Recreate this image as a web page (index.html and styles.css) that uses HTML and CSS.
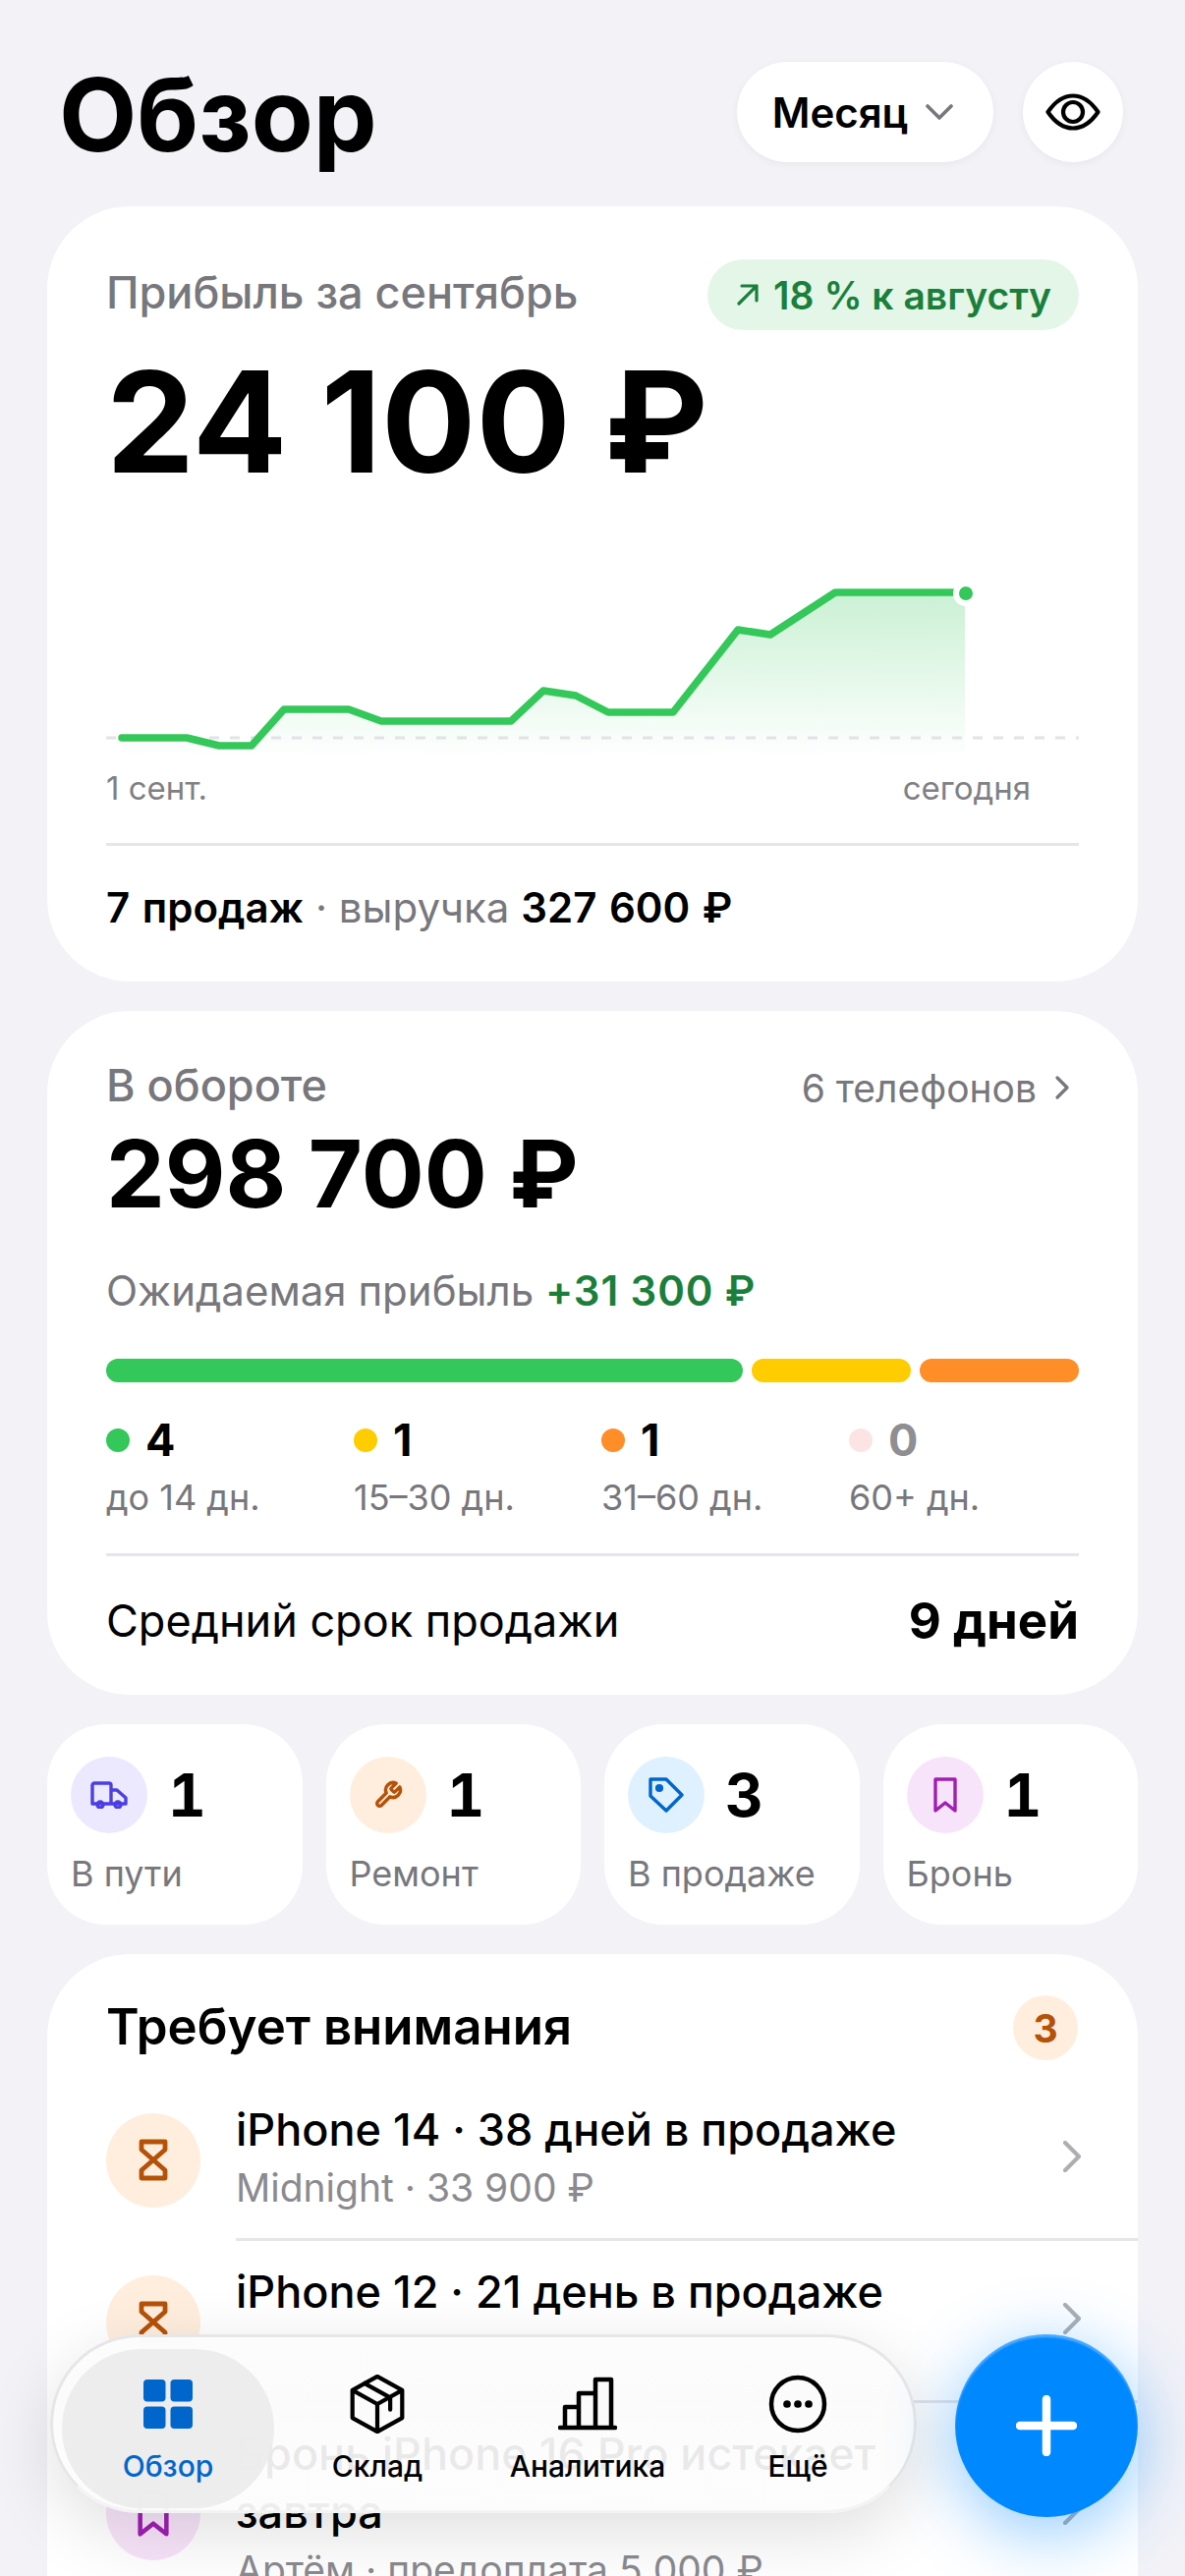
FILE: index.html
```html
<!DOCTYPE html>
<html lang="ru">
<head>
    <meta charset="UTF-8">
    <meta name="viewport" content="width=device-width, initial-scale=1.0">
    <title>Обзор</title>
    <link rel="stylesheet" href="styles.css">
</head>
<body>
<div class="screen">
    <header class="top">
        <h1>Обзор</h1>
        <div class="top-actions">
            <button class="pill">Месяц
                <svg class="pill-chev" viewBox="0 0 28 16"><path d="M2 2l12 12L26 2"/></svg>
            </button>
            <button class="round">
                <svg viewBox="0 0 56 38"><path d="M2.5 19C10 8 19 2.5 28 2.5S46 8 53.5 19C46 30 37 35.5 28 35.5S10 30 2.5 19Z"/><circle cx="28" cy="19" r="10"/></svg>
            </button>
        </div>
    </header>

    <section class="card profit">
        <div class="card-head">
            <span class="muted">Прибыль за сентябрь</span>
            <span class="trend">
                <svg viewBox="0 0 24 24"><path d="M3 21L21 3M6 3h15v15"/></svg>
                18 % к августу
            </span>
        </div>
        <div class="big">24 100 ₽</div>
        <svg class="chart" viewBox="0 0 990 192">
            <defs>
                <linearGradient id="chartFill" x1="0" y1="0" x2="0" y2="1">
                    <stop offset="0" stop-color="#34c759" stop-opacity="0.26"/>
                    <stop offset="1" stop-color="#34c759" stop-opacity="0"/>
                </linearGradient>
            </defs>
            <path class="chart-area" d="M16 171H82L115 179H148L181 142H247L280 154H412L445 123L478 128L511 145H577L643 61L676 66L742 23H874V192H16Z" fill="url(#chartFill)"/>
            <line class="chart-base" x1="0" y1="171" x2="990" y2="171"/>
            <path class="chart-line" d="M16 171H82L115 179H148L181 142H247L280 154H412L445 123L478 128L511 145H577L643 61L676 66L742 23H874"/>
            <circle class="chart-dot" cx="875" cy="24" r="10"/>
        </svg>
        <div class="chart-labels">
            <span>1 сент.</span>
            <span class="chart-today">сегодня</span>
        </div>
        <div class="summary"><b>7 продаж</b> · выручка <b>327 600 ₽</b></div>
    </section>

    <section class="card stock">
        <div class="card-head stock-head">
            <span class="muted">В обороте</span>
            <span class="phones">6 телефонов
                <svg viewBox="0 0 16 26"><path d="M3 3l10 10L3 23"/></svg>
            </span>
        </div>
        <div class="big-2">298 700 ₽</div>
        <div class="expected">Ожидаемая прибыль <b>+31 300 ₽</b></div>
        <div class="bar">
            <span class="seg seg-wide green"></span>
            <span class="seg yellow"></span>
            <span class="seg orange"></span>
        </div>
        <div class="legend">
            <div>
                <div class="legend-num"><i class="dot green"></i>4</div>
                <div class="legend-label">до 14 дн.</div>
            </div>
            <div>
                <div class="legend-num"><i class="dot yellow"></i>1</div>
                <div class="legend-label">15–30 дн.</div>
            </div>
            <div>
                <div class="legend-num"><i class="dot orange"></i>1</div>
                <div class="legend-label">31–60 дн.</div>
            </div>
            <div>
                <div class="legend-num zero"><i class="dot pink"></i>0</div>
                <div class="legend-label">60+ дн.</div>
            </div>
        </div>
        <div class="avg">
            <span>Средний срок продажи</span>
            <b>9 дней</b>
        </div>
    </section>

    <section class="stats">
        <div class="stat">
            <div class="stat-top">
                <span class="ico ico-violet">
                    <svg class="truck" viewBox="0 0 38 28"><path d="M2 23V4a2 2 0 0 1 2-2h15a2 2 0 0 1 2 2v19M21 9h6l9 8v6H2"/><circle cx="10" cy="24" r="3"/><circle cx="28" cy="24" r="3"/></svg>
                </span>
                <b>1</b>
            </div>
            <div class="stat-label">В пути</div>
        </div>
        <div class="stat">
            <div class="stat-top">
                <span class="ico ico-orange">
                    <svg class="wrench" viewBox="0 0 24 24"><path d="M14.7 6.3a1 1 0 0 0 0 1.4l1.6 1.6a1 1 0 0 0 1.4 0l3.77-3.77a6 6 0 0 1-7.94 7.94l-6.91 6.91a2.12 2.12 0 0 1-3-3l6.91-6.91a6 6 0 0 1 7.94-7.94l-3.76 3.76z"/></svg>
                </span>
                <b>1</b>
            </div>
            <div class="stat-label">Ремонт</div>
        </div>
        <div class="stat">
            <div class="stat-top">
                <span class="ico ico-blue">
                    <svg class="tag" viewBox="0 0 36 36"><path d="M2 2h16l16 16-16 16L2 19Z"/><circle class="solid" cx="11" cy="11" r="2.4"/></svg>
                </span>
                <b>3</b>
            </div>
            <div class="stat-label">В продаже</div>
        </div>
        <div class="stat">
            <div class="stat-top">
                <span class="ico ico-purple">
                    <svg class="mark" viewBox="0 0 24 36"><path d="M2 2h20v32l-10-8-10 8Z"/></svg>
                </span>
                <b>1</b>
            </div>
            <div class="stat-label">Бронь</div>
        </div>
    </section>

    <section class="card alerts">
        <div class="alerts-head">
            <h2>Требует внимания</h2>
            <span class="count">3</span>
        </div>

        <div class="row">
            <span class="ico row-ico ico-orange">
                <svg class="glass" viewBox="0 0 32 43"><path d="M4 3h24v8L16 21.500 28 32v8H4v-8l12-10.500L4 11Z"/></svg>
            </span>
            <div class="row-main">
                <div class="row-text">
                    <div class="row-title">iPhone 14 · 38 дней в продаже</div>
                    <div class="row-sub">Midnight · 33 900 ₽</div>
                </div>
                <svg class="row-chev" viewBox="0 0 18 32"><path d="M2 2l14 14L2 30"/></svg>
            </div>
        </div>

        <div class="row">
            <span class="ico row-ico ico-orange">
                <svg class="glass" viewBox="0 0 32 43"><path d="M4 3h24v8L16 21.500 28 32v8H4v-8l12-10.500L4 11Z"/></svg>
            </span>
            <div class="row-main">
                <div class="row-text">
                    <div class="row-title">iPhone 12 · 21 день в продаже</div>
                    <div class="row-sub">&nbsp;</div>
                </div>
                <svg class="row-chev" viewBox="0 0 18 32"><path d="M2 2l14 14L2 30"/></svg>
            </div>
        </div>

        <div class="row">
            <span class="ico row-ico ico-purple">
                <svg class="mark" viewBox="0 0 24 36"><path d="M2 2h20v32l-10-8-10 8Z"/></svg>
            </span>
            <div class="row-main">
                <div class="row-text">
                    <div class="row-title">Бронь iPhone 16 Pro истекает завтра</div>
                    <div class="row-sub">Артём · предоплата 5 000 ₽</div>
                </div>
                <svg class="row-chev" viewBox="0 0 18 32"><path d="M2 2l14 14L2 30"/></svg>
            </div>
        </div>
    </section>

    <nav class="tabbar">
        <a class="tab active">
            <svg class="tab-grid" viewBox="0 0 50 50">
                <rect width="22.5" height="22.5" rx="4"/>
                <rect x="27.5" width="22.5" height="22.5" rx="4"/>
                <rect y="27.5" width="22.5" height="22.5" rx="4"/>
                <rect x="27.5" y="27.5" width="22.5" height="22.5" rx="4"/>
            </svg>
            <span>Обзор</span>
        </a>
        <a class="tab">
            <svg viewBox="0 0 60 64"><path d="M30 2l27 15v30L30 62 3 47V17ZM3 17l27 15 27-15M30 32v30M16 9.500l28 15.500v13"/></svg>
            <span>Склад</span>
        </a>
        <a class="tab">
            <svg viewBox="0 0 60 54"><path d="M2 51h56M7 51V30h14M21 51V16h17M38 51V2h16v49"/></svg>
            <span>Аналитика</span>
        </a>
        <a class="tab">
            <svg viewBox="0 0 60 60"><circle cx="30" cy="30" r="27"/><circle class="solid" cx="19" cy="30" r="1.600"/><circle class="solid" cx="30" cy="30" r="1.600"/><circle class="solid" cx="41" cy="30" r="1.600"/></svg>
            <span>Ещё</span>
        </a>
    </nav>

    <button class="fab">
        <svg viewBox="0 0 62 62"><path d="M31 4v54M4 31h54"/></svg>
    </button>
</div>
</body>
</html>
```

FILE: styles.css
```css
* {
    box-sizing: border-box;
}
body {
    margin: 0;
    background: #f2f2f7;
    font-family: Inter, "Noto Sans", sans-serif;
    color: #000;
}
.screen {
    position: relative;
    width: 1206px;
    height: 2622px;
    overflow: hidden;
    background: #f2f2f7;
}
svg {
    display: block;
    fill: none;
    stroke: currentColor;
    stroke-linecap: round;
    stroke-linejoin: round;
}
svg .solid {
    fill: currentColor;
}
b {
    font-weight: 700;
}

/* top */
.top {
    display: flex;
    justify-content: space-between;
    align-items: center;
    height: 102px;
    margin: 63px 63px 45px 60px;
}
h1 {
    margin: 5px 0 0;
    font-size: 103px;
    font-weight: 700;
    line-height: 102px;
}
.top-actions {
    display: flex;
    gap: 30px;
}
button {
    border: 0;
    padding: 0;
    font-family: inherit;
    color: inherit;
}
.pill,
.round {
    display: flex;
    align-items: center;
    justify-content: center;
    height: 102px;
    background: #fff;
    border-radius: 51px;
    box-shadow: 0 2px 8px rgba(0, 0, 0, 0.05);
}
.pill {
    width: 261px;
    gap: 18px;
    padding-right: 5px;
    font-size: 42px;
    font-weight: 600;
}
.pill-chev {
    width: 28px;
    height: 16px;
    stroke: #77777c;
    stroke-width: 3.600;
}
.round {
    width: 102px;
}
.round svg {
    width: 56px;
    height: 38px;
    stroke-width: 4.200;
}

/* cards */
.card {
    margin: 0 48px 30px;
    padding: 0 60px;
    background: #fff;
    border-radius: 84px;
}
.card-head {
    display: flex;
    justify-content: space-between;
    align-items: center;
}
.muted {
    margin-bottom: 5px;
    font-size: 45px;
    font-weight: 500;
    color: #77777c;
}
.profit {
    height: 789px;
    padding-top: 54px;
}
.trend {
    display: flex;
    align-items: center;
    gap: 14px;
    height: 72px;
    padding: 0 28px 0 29px;
    background: #e3f6e8;
    border-radius: 36px;
    font-size: 39px;
    font-weight: 600;
    color: #1b7f3b;
}
.trend svg {
    width: 24px;
    height: 24px;
    stroke-width: 3.200;
}
.big {
    margin-top: 24px;
    font-size: 143px;
    font-weight: 700;
    line-height: 138px;
}
.chart {
    width: 990px;
    height: 192px;
    margin-top: 82px;
}
.chart-area {
    stroke: none;
}
.chart-base {
    stroke: #e2e2e8;
    stroke-width: 3;
    stroke-dasharray: 10 11;
    stroke-linecap: butt;
}
.chart-line {
    stroke: #34c759;
    stroke-width: 7.500;
}
.chart-dot {
    fill: #34c759;
    stroke: #fff;
    stroke-width: 6;
}
.chart-labels {
    display: flex;
    justify-content: space-between;
    margin-top: 10px;
    padding-right: 49px;
    font-size: 33px;
    line-height: 40px;
    color: #808085;
}
.summary {
    margin-top: 36px;
    padding-top: 38px;
    border-top: 3px solid #e5e5ea;
    font-size: 42px;
    line-height: 50px;
    color: #77777c;
}
.summary b {
    color: #000;
    font-weight: 600;
    word-spacing: 2px;
}

.stock {
    height: 696px;
    padding-top: 51px;
}
.stock-head {
    height: 54px;
}
.phones {
    display: flex;
    align-items: center;
    gap: 18px;
    margin-right: 9px;
    font-size: 39px;
    color: #77777c;
}
.phones svg {
    width: 16px;
    height: 26px;
    stroke-width: 3.300;
}
.big-2 {
    margin-top: 11px;
    font-size: 95px;
    font-weight: 700;
    line-height: 100px;
}
.expected {
    margin-top: 44px;
    font-size: 42px;
    line-height: 50px;
    color: #77777c;
}
.expected b {
    font-weight: 600;
    letter-spacing: 0.9px;
    color: #1b7f3b;
}
.bar {
    display: flex;
    gap: 9px;
    margin-top: 44px;
}
.seg {
    flex: 1;
    height: 24px;
    border-radius: 12px;
}
.seg-wide {
    flex: 4;
}
.green {
    background: #34c759;
}
.yellow {
    background: #ffcc00;
}
.orange {
    background: #ff8d28;
}
.pink {
    background: #fde4e4;
}
.legend {
    display: grid;
    grid-template-columns: repeat(4, 1fr);
    gap: 18px;
    margin-top: 34px;
}
.legend-num {
    display: flex;
    align-items: center;
    gap: 16px;
    font-size: 45px;
    font-weight: 700;
    line-height: 50px;
}
.legend-num.zero {
    color: #8e8e93;
}
.dot {
    width: 24px;
    height: 24px;
    border-radius: 50%;
}
.legend-label {
    margin-top: 11px;
    font-size: 36px;
    line-height: 44px;
    color: #77777c;
}
.avg {
    display: flex;
    justify-content: space-between;
    align-items: center;
    margin-top: 35px;
    padding-top: 36px;
    border-top: 3px solid #e5e5ea;
    font-size: 45px;
    line-height: 60px;
}
.avg b {
    font-size: 51px;
}

/* status tiles */
.stats {
    display: flex;
    gap: 24px;
    margin: 0 48px 30px;
}
.stat {
    flex: 1;
    height: 204px;
    padding: 33px 24px 0;
    background: #fff;
    border-radius: 60px;
}
.stat-top {
    display: flex;
    align-items: center;
    gap: 21px;
    font-size: 60px;
    font-variant-numeric: tabular-nums;
}
.ico {
    display: flex;
    align-items: center;
    justify-content: center;
    flex: none;
    width: 78px;
    height: 78px;
    border-radius: 50%;
}
.ico-violet {
    background: #ece9ff;
    color: #4b3fe4;
}
.ico-orange {
    background: #ffeedd;
    color: #b5520a;
}
.ico-blue {
    background: #dff0ff;
    color: #0066cc;
}
.ico-purple {
    background: #f8e4fa;
    color: #a01fb3;
}
.truck {
    width: 38px;
    height: 28px;
    stroke-width: 3.400;
}
.wrench {
    width: 30px;
    height: 30px;
    stroke-width: 2.800;
}
.tag {
    width: 36px;
    height: 36px;
    stroke-width: 3.400;
}
.mark {
    width: 24px;
    height: 36px;
    stroke-width: 3.400;
}
.stat-label {
    margin-top: 17px;
    font-size: 36px;
    line-height: 48px;
    color: #77777c;
}

/* attention list */
.alerts {
    margin-bottom: 0;
    padding: 42px 0 0;
    border-radius: 84px 84px 0 0;
}
.alerts-head {
    display: flex;
    justify-content: space-between;
    align-items: center;
    height: 66px;
    margin: 0 61px 19px 60px;
}
h2 {
    margin: 0 0 3px;
    font-size: 51px;
    font-weight: 600;
}
.count {
    display: flex;
    align-items: center;
    justify-content: center;
    width: 66px;
    height: 66px;
    border-radius: 50%;
    background: #ffeedd;
    color: #b5520a;
    font-size: 39px;
    font-weight: 700;
}
.row {
    display: flex;
    align-items: center;
    gap: 36px;
    padding-left: 60px;
}
.row-ico {
    width: 96px;
    height: 96px;
}
.glass {
    width: 32px;
    height: 43px;
    stroke-width: 4.800;
}
.row-ico .mark {
    width: 32px;
    height: 48px;
    stroke-width: 3.400;
}
.row-main {
    display: flex;
    flex: 1;
    justify-content: space-between;
    align-items: center;
    padding: 22px 58px 27px 0;
    border-bottom: 3px solid #e5e5ea;
}
.row-text {
    width: 780px;
}
.row-title {
    font-size: 45px;
    font-weight: 500;
    line-height: 59px;
}
.row-sub {
    margin-top: 6px;
    font-size: 39px;
    line-height: 48px;
    color: #8a8a8f;
}
.row-chev {
    width: 18px;
    height: 32px;
    stroke: #aeaeb2;
    stroke-width: 4.200;
}

/* floating nav */
.tabbar {
    position: absolute;
    left: 51px;
    top: 2376px;
    display: flex;
    width: 882px;
    height: 182px;
    padding: 12px 0 4px 9px;
    background: linear-gradient(180deg, rgba(252, 252, 252, 0.99) 0%, rgba(251, 251, 251, 0.98) 40%, rgba(252, 252, 252, 0.92) 65%, rgba(252, 252, 252, 0.94) 100%);
    border: 3px solid #e6e6e8;
    border-bottom-color: #f3f3f3;
    border-radius: 91px;
    box-shadow: 0 20px 70px rgba(0, 0, 0, 0.13);
}
.tab {
    display: flex;
    flex: none;
    flex-direction: column;
    align-items: center;
    justify-content: flex-end;
    width: 214px;
    height: 162px;
    padding-bottom: 24px;
    border-radius: 81px;
    font-size: 30px;
    font-weight: 500;
    line-height: 38px;
}
.tab svg {
    width: 60px;
    height: 60px;
    margin-bottom: 14px;
    stroke-width: 4.500;
}
.tab.active {
    width: 216px;
    margin-right: -2px;
    background: rgba(235, 235, 235, 0.92);
    color: #0066cc;
}
.tab svg.tab-grid {
    width: 50px;
    height: 50px;
    margin-bottom: 19px;
    fill: currentColor;
    stroke: none;
}
.fab {
    position: absolute;
    left: 972px;
    top: 2376px;
    display: flex;
    align-items: center;
    justify-content: center;
    width: 186px;
    height: 186px;
    border-radius: 50%;
    background: #0088ff;
    color: #fff;
    box-shadow: inset 0 3px 2px rgba(255, 255, 255, 0.3), 0 15px 70px rgba(0, 136, 255, 0.45);
}
.fab svg {
    width: 62px;
    height: 62px;
    stroke-width: 8.500;
}
```
